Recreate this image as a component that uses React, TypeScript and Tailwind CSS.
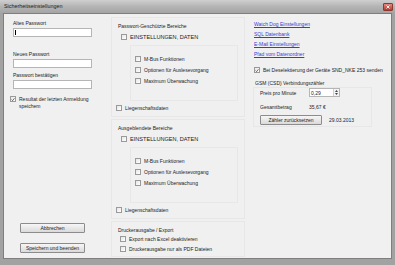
import React from "react";

function Box({ checked = false }: { checked?: boolean }) {
  return (
    <div className="w-[6px] h-[6px] shrink-0 border border-[#9a9a9a] bg-gradient-to-br from-[#e6e6e6] to-[#ffffff] flex items-center justify-center">
      {checked && (
        <svg width="5" height="5" viewBox="0 0 10 10">
          <path d="M1.5 5.2 L4 7.8 L8.6 2" stroke="#3a3a3a" strokeWidth="1.8" fill="none" />
        </svg>
      )}
    </div>
  );
}

function Check({ label, checked = false, big = false }: { label: string; checked?: boolean; big?: boolean }) {
  return (
    <div className="flex items-center gap-[3px] h-[10px]">
      <Box checked={checked} />
      <span className={big ? "text-[5.6px] leading-[6px]" : "leading-[6px]"}>{label}</span>
    </div>
  );
}

function Btn({ label, className = "" }: { label: string; className?: string }) {
  return (
    <div
      className={
        "h-[10px] border border-[#8c8c8c] rounded-[1px] bg-gradient-to-b from-[#f6f6f6] to-[#dadada] flex items-center justify-center leading-[6px] " +
        className
      }
    >
      {label}
    </div>
  );
}

function Section({ title, children }: { title: string; children?: React.ReactNode }) {
  return (
    <div className="border border-[#e7e7e7] pl-[6px] pt-[4px]">
      <div className="leading-[8px] h-[8px]">{title}</div>
      {children}
    </div>
  );
}

function AreaGroup({ title }: { title: string }) {
  return (
    <Section title={title}>
      <div className="ml-[3px] mt-[2px]">
        <Check label="EINSTELLUNGEN, DATEN" big />
      </div>
      <div className="ml-[12px] mr-[6px] mt-[3px] h-[56px] border border-[#e7e7e7] pl-[4px] pt-[8px] flex flex-col gap-[1px]">
        <Check label="M-Bus Funktionen" />
        <Check label="Optionen für Auslesevorgang" />
        <Check label="Maximum Überwachung" />
      </div>
      <div className="-ml-[2px] mt-[2px] mb-[3px]">
        <Check label="Liegenschaftsdaten" />
      </div>
    </Section>
  );
}

export default function App() {
  return (
    <div className="w-[395px] h-[265px] bg-[#a2a2a2] flex flex-col overflow-hidden font-['Liberation_Sans',Arial,sans-serif] text-[5px] text-[#1c1c1c]">
      <div className="h-[13px] shrink-0 flex items-center justify-between pl-[4px] pr-[2px] bg-gradient-to-b from-[#cfcfcf] via-[#b4b4b4] to-[#a4a4a4]">
        <span className="text-[5.4px] text-[#202020]">Sicherheitseinstellungen</span>
        <div className="w-[10px] h-[8px] rounded-[1px] bg-gradient-to-b from-[#e08a80] to-[#b8392e] border border-[#8a3a33] flex items-center justify-center">
          <svg width="4" height="4" viewBox="0 0 8 8">
            <path d="M1 1 L7 7 M7 1 L1 7" stroke="#ffffff" strokeWidth="1.8" />
          </svg>
        </div>
      </div>
      <div className="flex-1 ml-[3px] mr-[3px] mb-[6px] bg-[#f0f0f0] border border-[#7e7e7e] flex">
        {/* left column */}
        <div className="w-[107px] shrink-0 pl-[9px] pt-[6px] pb-[5px] flex flex-col">
          <div className="leading-[6px]">Altes Passwort</div>
          <div className="mt-[2px] w-[79px] h-[9px] bg-white border border-[#b5b5b5] flex items-center pl-[1px]">
            <div className="w-[1px] h-[5px] bg-black" />
          </div>
          <div className="mt-[14px] leading-[6px]">Neues Passwort</div>
          <div className="mt-[2px] w-[79px] h-[9px] bg-white border border-[#b5b5b5]" />
          <div className="mt-[4px] leading-[6px]">Passwort bestätigen</div>
          <div className="mt-[2px] w-[79px] h-[9px] bg-white border border-[#b5b5b5]" />
          <div className="mt-[7px] -ml-[3px] flex items-start gap-[3px]">
            <div className="mt-[0px]">
              <Box checked />
            </div>
            <div className="leading-[7px]">
              Resultat der letzten Anmeldung
              <br />
              speichem
            </div>
          </div>
          <div className="mt-auto ml-[7px] flex flex-col gap-[10px]">
            <Btn label="Abbrechen" className="w-[65px]" />
            <Btn label="Speichern und beenden" className="w-[65px]" />
          </div>
        </div>

        {/* middle column */}
        <div className="w-[134px] shrink-0 pt-[3px] flex flex-col gap-[2px]">
          <AreaGroup title="Passwort-Geschützte Bereiche" />
          <AreaGroup title="Ausgeblendete Bereiche" />
          <Section title="Druckerausgabe / Export">
            <div className="ml-[2px] pb-[2px]">
              <Check label="Export nach Excel deaktivieren" />
              <Check label="Druckerausgabe nur als PDF Dateien" />
            </div>
          </Section>
        </div>

        {/* right column */}
        <div className="flex-1 pl-[9px] pt-[5px] flex flex-col">
          <div className="flex flex-col leading-[10px] text-[#3b3bd0] underline">
            <span>Watch Dog Einstellungen</span>
            <span>SQL Datenbank</span>
            <span>E-Mail Einstellungen</span>
            <span>Pfad vom Datenordner</span>
          </div>
          <div className="mt-[6px]">
            <Check label="Bei Deselektierung der Geräte SND_NKE 253 senden" checked />
          </div>
          <div className="mt-[4px] ml-[1px] leading-[8px]">GSM (CSD) Verbindungszähler</div>
          <div className="-ml-[1px] w-[119px] h-[40px] border border-[#e7e7e7] pl-[6px] pt-[0px] flex flex-col">
            <div className="flex items-center h-[9px]">
              <span className="w-[49px] leading-[6px]">Preis pro Minute</span>
              <div className="w-[31px] h-[9px] bg-white border border-[#b5b5b5] flex items-center justify-between pl-[1px]">
                <span className="leading-[6px]">0,29</span>
                <div className="w-[6px] h-full border-l border-[#cfcfcf] flex flex-col items-center justify-around bg-[#f3f3f3]">
                  <svg width="3" height="2" viewBox="0 0 6 4">
                    <path d="M0 4 L3 0 L6 4 Z" fill="#444" />
                  </svg>
                  <svg width="3" height="2" viewBox="0 0 6 4">
                    <path d="M0 0 L3 4 L6 0 Z" fill="#444" />
                  </svg>
                </div>
              </div>
            </div>
            <div className="flex items-center h-[9px] mt-[5px]">
              <span className="w-[49px] leading-[6px]">Gesamtbetrag</span>
              <span className="leading-[6px]">35,67 €</span>
            </div>
            <div className="flex items-center mt-[4px] gap-[7px]">
              <Btn label="Zähler zurücksetzen" className="w-[62px]" />
              <span className="leading-[6px]">29.03.2013</span>
            </div>
          </div>
        </div>
      </div>
    </div>
  );
}
